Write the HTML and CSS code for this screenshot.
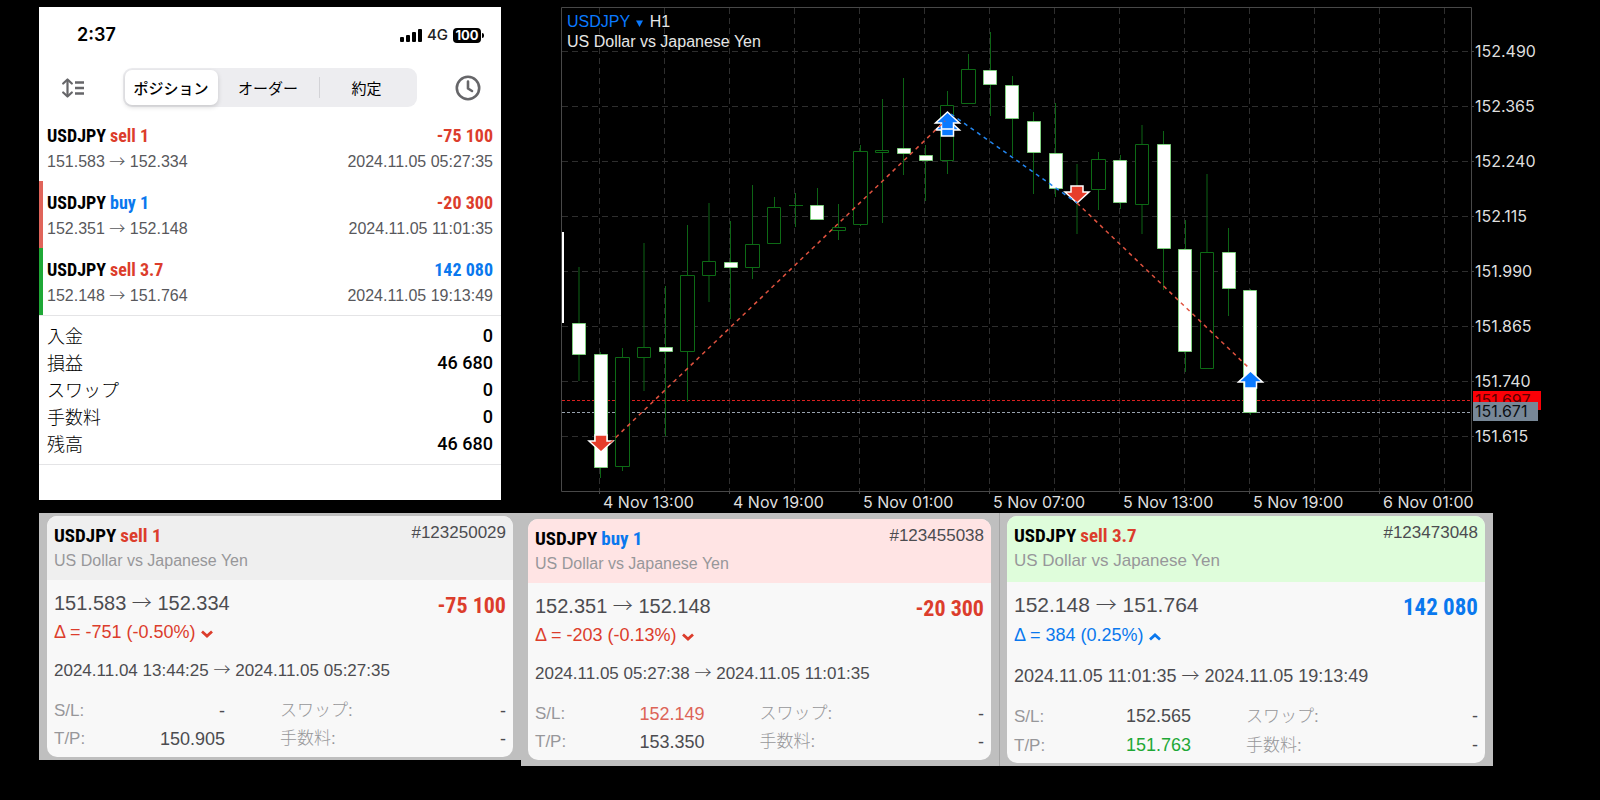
FILE: index.html
```html
<!DOCTYPE html>
<html lang="ja">
<head>
<meta charset="utf-8">
<meta name="viewport" content="width=device-width, initial-scale=1">
<title>USDJPY</title>
<link rel="stylesheet" href="styles.css">
</head>
<body>
<main class="board">
  <div class="top">
    <section class="phone">
      <div class="status">
        <time class="clock">2:37</time>
        <div class="status-right">
          <svg class="signal" width="22" height="13" viewBox="0 0 22 13" aria-hidden="true"><rect x="0" y="8" width="4" height="5" rx="1"/><rect x="6" y="6" width="4" height="7" rx="1"/><rect x="12" y="3" width="4" height="10" rx="1"/><rect x="18" y="0" width="4" height="13" rx="1"/></svg>
          <span class="network">4G</span>
          <span class="battery">100</span>
        </div>
      </div>
      <div class="toolbar">
        <button class="icon-button" type="button" aria-label="並べ替え">
          <svg width="22" height="20" viewBox="0 0 22 20" fill="none" stroke="#666669" aria-hidden="true"><path d="M5.500 3v14" stroke-width="2.200"/><path d="M1.200 5.500L5.500 1.500l4.300 4M1.200 14.500l4.300 4 4.300-4" stroke-width="2.200" stroke-linecap="round" stroke-linejoin="round"/><path d="M13 4.500h9M13 10h9M13 15.500h9" stroke-width="2.600"/></svg>
        </button>
        <div class="segments">
          <button class="segment active" type="button">ポジション</button>
          <button class="segment" type="button">オーダー</button>
          <button class="segment divided" type="button">約定</button>
        </div>
        <button class="icon-button" type="button" aria-label="履歴">
          <svg width="26" height="26" viewBox="0 0 26 26" fill="none" stroke="#666669" stroke-width="2.600" stroke-linecap="round" stroke-linejoin="round" aria-hidden="true"><circle cx="13" cy="13" r="11.200"/><path d="M13 6.500V13.500l4 2.500"/></svg>
        </button>
      </div>
      <ul class="deals">
        <li class="deal">
          <div class="line head"><span class="pair"><span>USDJPY</span> <span class="red">sell 1</span></span><span class="red">-75 100</span></div>
          <div class="line sub"><span>151.583 <span class="to">→</span> 152.334</span><span>2024.11.05 05:27:35</span></div>
        </li>
        <li class="deal loss">
          <div class="line head"><span class="pair"><span>USDJPY</span> <span class="blue">buy 1</span></span><span class="red">-20 300</span></div>
          <div class="line sub"><span>152.351 <span class="to">→</span> 152.148</span><span>2024.11.05 11:01:35</span></div>
        </li>
        <li class="deal gain">
          <div class="line head"><span class="pair"><span>USDJPY</span> <span class="red">sell 3.7</span></span><span class="blue">142 080</span></div>
          <div class="line sub"><span>152.148 <span class="to">→</span> 151.764</span><span>2024.11.05 19:13:49</span></div>
        </li>
      </ul>
      <dl class="totals">
        <div class="line"><dt>入金</dt><dd>0</dd></div>
        <div class="line"><dt>損益</dt><dd>46 680</dd></div>
        <div class="line"><dt>スワップ</dt><dd>0</dd></div>
        <div class="line"><dt>手数料</dt><dd>0</dd></div>
        <div class="line"><dt>残高</dt><dd>46 680</dd></div>
      </dl>
    </section>

    <section class="chart">
      <div class="chart-title">
        <div><button class="symbol" type="button">USDJPY <svg width="7" height="7" viewBox="0 0 7 7" aria-hidden="true"><path d="M0 0.500h7L3.500 7z" fill="#0a7aff"/></svg></button> H1</div>
        <div>US Dollar vs Japanese Yen</div>
      </div>
      <svg class="plot" viewBox="561 0 1039 512" role="img" aria-label="USDJPY H1">
        <defs>
          <path id="up" d="M0 0L12 11H6V17H-6V11H-12Z"/>
          <path id="down" d="M0 0L12 -11H6V-17H-6V-11H-12Z"/>
        </defs>
        <path class="grid" d="M599.500 8V491M664.500 8V491M729.500 8V491M794.500 8V491M859.500 8V491M924.500 8V491M989.500 8V491M1054.500 8V491M1119.500 8V491M1184.500 8V491M1249.500 8V491M1314.500 8V491M1379.500 8V491M1444.500 8V491"/>
        <path class="grid" d="M562 51.500H1471M562 106.500H1471M562 161.500H1471M562 216.500H1471M562 271.500H1471M562 326.500H1471M562 381.500H1471M562 436.500H1471"/>
        <path class="frame" d="M561.500 7.500H1471.500V491.500H561.500ZM599.500 491V494M729.500 491V494M859.500 491V494M989.500 491V494M1119.500 491V494M1249.500 491V494M1379.500 491V494M1471 51.500H1474M1471 106.500H1474M1471 161.500H1474M1471 216.500H1474M1471 271.500H1474M1471 326.500H1474M1471 381.500H1474M1471 436.500H1474"/>
        <path class="level" stroke="#d8211f" d="M562 400.500H1470"/>
        <path class="level" stroke="#98a2ae" d="M562 412.500H1470"/>

        <path class="wick" d="M579 267V381M600.500 352V478M622.500 348V471M644 243V391M665.500 286V436M687.500 225V402M709 203V302M730.500 221V319M752.500 185V279M774.500 197V243M795.500 193V227M817.500 188V220M838.500 204V240M860.500 145V226M882.500 99V223M903.500 78V175M925.500 145V201M947.500 91V174M968.500 54V104M990.500 32V116M1012.500 76V156M1033.500 112V194M1055.500 103V197M1077 164V234M1098.500 152V210M1120.500 155V209M1142 125V234M1163.500 131V290M1185.500 220V372M1207 174V252M1228.500 228V316M1250.500 289V415"/>
        <path class="hollow" d="M615.500 357.500h14v109h-14zM637.500 347.500h13v10h-13zM680.500 275.500h14v76h-14zM702.500 261.500h13v14h-13zM745.500 244.500h14v23h-14zM767.500 207.500h13v36h-13zM789 205.500h14M832.500 227.500h13v3h-13zM853.500 151.500h14v73h-14zM875.500 150.500h13v2h-13zM940.500 105.500h13v55h-13zM961.500 69.500h14v34h-14zM1091.500 159.500h14v30h-14zM1135.500 144.500h13v60h-13zM1200.500 252.500h13v116h-13z"/>
        <path class="solid" d="M572.500 323.500h13v31h-13zM594.500 354.500h13v113h-13zM659.500 347.500h13v4h-13zM724.500 262.500h13v5h-13zM810.500 205.500h13v14h-13zM897.500 148.500h13v5h-13zM919.500 155.500h13v5h-13zM983.500 70.500h13v14h-13zM1005.500 85.500h13v33h-13zM1027.500 121.500h13v31h-13zM1049.500 153.500h13v35h-13zM1113.500 160.500h13v42h-13zM1157.500 144.500h13v104h-13zM1178.500 249.500h13v102h-13zM1222.500 252.500h13v36h-13zM1243.500 290.500h13v122h-13z"/>
        <rect x="562" y="232" width="2" height="91" fill="#fff"/>

        <g stroke="#fff" stroke-width="1.500">
          <use href="#down" x="601" y="452" fill="#e63e2b"/>
          <use href="#up" x="947.500" y="119" fill="#0a7aff"/>
          <use href="#up" x="947.500" y="112" fill="#0a7aff"/>
          <use href="#down" x="1077" y="203" fill="#e63e2b"/>
          <use href="#up" x="1250.500" y="371" fill="#0a7aff"/>
        </g>
        <path class="trade" stroke="#e0523f" d="M610 443L945 121"/>
        <path class="trade" stroke="#2286f0" d="M951 114L1077 203"/>
        <path class="trade" stroke="#e0523f" d="M1077 203L1250 369"/>

        <g class="axis">
          <text x="1475" y="57">152.490</text>
          <text x="1475" y="112">152.365</text>
          <text x="1475" y="167">152.240</text>
          <text x="1475" y="222">152.115</text>
          <text x="1475" y="277">151.990</text>
          <text x="1475" y="332">151.865</text>
          <text x="1475" y="387">151.740</text>
          <text x="1475" y="442">151.615</text>
          <text x="603" y="508">4 Nov 13:00</text>
          <text x="733" y="508">4 Nov 19:00</text>
          <text x="863" y="508">5 Nov 01:00</text>
          <text x="993" y="508">5 Nov 07:00</text>
          <text x="1123" y="508">5 Nov 13:00</text>
          <text x="1253" y="508">5 Nov 19:00</text>
          <text x="1383" y="508">6 Nov 01:00</text>
        </g>
        <rect x="1473" y="391" width="68" height="19" fill="#fb0007"/>
        <text class="quote" x="1475" y="406" fill="#5c0000">151.697</text>
        <rect x="1473" y="402" width="65" height="19" fill="#778797"/>
        <text class="quote" x="1475" y="417" fill="#0c0f12">151.671</text>
      </svg>
    </section>
  </div>

  <div class="details">
    <section class="tray">
      <article class="card">
        <header class="card-head">
          <div class="line"><h2 class="card-title pair"><span>USDJPY</span> <span class="red">sell 1</span></h2><span class="ticket">#123250029</span></div>
          <p class="desc">US Dollar vs Japanese Yen</p>
        </header>
        <div class="card-body">
          <div class="line price"><span>151.583 <span class="to">→</span> 152.334</span><strong class="profit red">-75 100</strong></div>
          <p class="delta red">Δ = -751 (-0.50%) <svg width="12" height="8" viewBox="0 0 12 8" aria-hidden="true"><path d="M1 1.500L6 6l5-4.500" fill="none" stroke="currentColor" stroke-width="2.800"/></svg></p>
          <p class="period">2024.11.04 13:44:25 <span class="to">→</span> 2024.11.05 05:27:35</p>
          <dl class="facts">
            <div class="fact"><dt>S/L:</dt><dd>-</dd></div>
            <div class="fact"><dt>スワップ:</dt><dd>-</dd></div>
            <div class="fact"><dt>T/P:</dt><dd>150.905</dd></div>
            <div class="fact"><dt>手数料:</dt><dd>-</dd></div>
          </dl>
        </div>
      </article>
    </section>
    <section class="tray middle">
      <article class="card">
        <header class="card-head pink">
          <div class="line"><h2 class="card-title pair"><span>USDJPY</span> <span class="blue">buy 1</span></h2><span class="ticket">#123455038</span></div>
          <p class="desc">US Dollar vs Japanese Yen</p>
        </header>
        <div class="card-body">
          <div class="line price"><span>152.351 <span class="to">→</span> 152.148</span><strong class="profit red">-20 300</strong></div>
          <p class="delta red">Δ = -203 (-0.13%) <svg width="12" height="8" viewBox="0 0 12 8" aria-hidden="true"><path d="M1 1.500L6 6l5-4.500" fill="none" stroke="currentColor" stroke-width="2.800"/></svg></p>
          <p class="period">2024.11.05 05:27:38 <span class="to">→</span> 2024.11.05 11:01:35</p>
          <dl class="facts">
            <div class="fact"><dt>S/L:</dt><dd class="hit-stop">152.149</dd></div>
            <div class="fact"><dt>スワップ:</dt><dd>-</dd></div>
            <div class="fact"><dt>T/P:</dt><dd>153.350</dd></div>
            <div class="fact"><dt>手数料:</dt><dd>-</dd></div>
          </dl>
        </div>
      </article>
    </section>
    <section class="tray last">
      <article class="card large">
        <header class="card-head green">
          <div class="line"><h2 class="card-title pair"><span>USDJPY</span> <span class="red">sell 3.7</span></h2><span class="ticket">#123473048</span></div>
          <p class="desc">US Dollar vs Japanese Yen</p>
        </header>
        <div class="card-body">
          <div class="line price"><span>152.148 <span class="to">→</span> 151.764</span><strong class="profit blue">142 080</strong></div>
          <p class="delta blue">Δ = 384 (0.25%) <svg width="12" height="8" viewBox="0 0 12 8" aria-hidden="true"><path d="M1 6.500L6 2l5 4.500" fill="none" stroke="currentColor" stroke-width="2.800"/></svg></p>
          <p class="period">2024.11.05 11:01:35 <span class="to">→</span> 2024.11.05 19:13:49</p>
          <dl class="facts">
            <div class="fact"><dt>S/L:</dt><dd>152.565</dd></div>
            <div class="fact"><dt>スワップ:</dt><dd>-</dd></div>
            <div class="fact"><dt>T/P:</dt><dd class="hit-target">151.763</dd></div>
            <div class="fact"><dt>手数料:</dt><dd>-</dd></div>
          </dl>
        </div>
      </article>
    </section>
  </div>
</main>
</body>
</html>
```

FILE: styles.css
```css
* { box-sizing: border-box; }

body {
  margin: 0;
  background: #000;
  color: #000;
  font-family: "Liberation Sans", "Noto Sans CJK JP", sans-serif;
  font-size: 16px;
}

h2, p, ul, dl, dd { margin: 0; padding: 0; }
ul { list-style: none; }
button { border: 0; padding: 0; background: none; font: inherit; color: inherit; }

.line { display: flex; justify-content: space-between; }
.red { color: #dc3d2c; }
.blue { color: #0a78ee; }
.pair { display: flex; gap: 4px; }
.to { font-family: "Noto Sans CJK JP", sans-serif; font-weight: 300; line-height: 1; }

.top {
  display: grid;
  grid-template-columns: 462fr 1039fr;
  gap: 60px;
  padding-left: 39px;
  align-items: start;
}

/* Phone panel */
.phone { margin-top: 7px; padding-bottom: 35px; background: #fff; }

.status {
  display: flex;
  justify-content: space-between;
  align-items: center;
  height: 56px;
  padding: 0 20px 0 38px;
}
.clock { font: 600 18px/24px Inter, sans-serif; }
.status-right { display: flex; align-items: center; gap: 5px; }
.network { font: 500 15px/20px Inter, sans-serif; color: #222; }
.battery {
  position: relative;
  width: 28px;
  border-radius: 4px;
  background: #000;
  color: #fff;
  font: 700 13px/15px Inter, sans-serif;
  text-align: center;
}
.battery::after {
  content: "";
  position: absolute;
  top: 5px;
  right: -3px;
  width: 2px;
  height: 5px;
  border-radius: 0 2px 2px 0;
  background: #000;
}

.toolbar {
  display: flex;
  justify-content: space-between;
  align-items: center;
  height: 51px;
  padding: 0 20px 2px 23px;
}
.icon-button { display: flex; }
.segments {
  display: grid;
  grid-template-columns: 93fr 101fr 96fr;
  width: 294px;
  padding: 2px;
  border-radius: 9px;
  background: #ededf0;
}
.segment {
  border-radius: 7px;
  font: 400 15px/35px "Noto Sans CJK JP", sans-serif;
}
.segment.active { background: #fff; box-shadow: 0 2px 5px rgba(0, 0, 0, .16); font-weight: 500; }
.segment.divided {
  background: linear-gradient(#d3d3d7, #d3d3d7) left center / 1px 21px no-repeat;
  border-radius: 0;
}

.deal { padding: 9px 8px 6px; }
.deal.loss { box-shadow: inset 4px 0 #e0645a; }
.deal.gain { box-shadow: inset 4px 0 #1fa836; }
.head {
  font: bold 18px/25px "Liberation Sans Narrow", "Roboto Condensed", "Open Sans Condensed", "Liberation Sans", sans-serif;
}
.sub { line-height: 27px; color: #58585c; }

.totals {
  padding: 6px 8px 7px;
  border-top: 1px solid #e4e4e6;
  border-bottom: 1px solid #e4e4e6;
  font-size: 18px;
  line-height: 27px;
}
.totals dt { font-family: "Noto Sans CJK JP", sans-serif; font-weight: 300; }
.totals dd { font-family: Roboto, sans-serif; font-weight: 500; }

/* Chart */
.chart { position: relative; }
.chart-title {
  position: absolute;
  top: 12px;
  left: 6px;
  color: #e6e6e6;
  line-height: 20px;
}
.symbol { color: #0a7aff; }
.symbol svg { margin: 0 2px; }
.plot { display: block; width: 100%; }
.plot .grid { fill: none; stroke: #2e2e2e; stroke-dasharray: 6 4; }
.plot .frame { fill: none; stroke: #484848; }
.plot .level { fill: none; stroke-dasharray: 3 2; }
.plot .wick { fill: none; stroke: #0d6415; }
.plot .hollow { fill: #000; stroke: #0d6a15; }
.plot .solid { fill: #fff; stroke: #7fce7f; }
.plot .trade { fill: none; stroke-width: 1.500; stroke-dasharray: 4 4; }
.axis text, .quote { font: 16px Inter, sans-serif; }
.axis { fill: #dedede; }

/* Position details */
.details {
  display: grid;
  grid-template-columns: 482fr 478fr 494fr;
  align-items: start;
  margin: 1px 107px 0 39px;
}
.tray { padding: 3px 8px; background: #bfbfbf; }
.tray.middle { padding: 6px 8px 6px 7px; }
.tray.last { border-left: 1px solid #a4a4a4; padding-left: 7px; }

.card { overflow: hidden; border-radius: 10px; background: #f8f8f8; color: #4c4c50; }
.card-head { padding: 6px 7px 8px; background: #efefef; }
.card-head.pink { background: #ffe4e4; }
.card-head.green { background: #dffddb; }
.card-title {
  color: #000;
  font: bold 19px/27px "Liberation Sans Narrow", "Roboto Condensed", "Open Sans Condensed", "Liberation Sans", sans-serif;
}
.ticket { font-size: 17px; line-height: 22px; }
.desc { line-height: 23px; color: #97979a; }

.card-body { padding: 9px 7px 4px; }
.price { font-size: 20px; line-height: 28px; }
.profit {
  font: bold 22px/34px "Liberation Sans Narrow", "Roboto Condensed", "Open Sans Condensed", "Liberation Sans", sans-serif;
  margin-bottom: -6px;
}
.delta { font-size: 18px; line-height: 30px; }
.period { margin-top: 12px; font-size: 17px; line-height: 24px; }
.facts {
  display: grid;
  grid-template-columns: 1fr 1fr;
  margin-top: 14px;
  line-height: 28px;
}
.fact { display: flex; justify-content: space-between; }
.fact:nth-child(odd) { padding-right: 55px; }
.fact dt { font-size: 17px; font-weight: 300; color: #97979a; }
.fact dd { font-size: 18px; }
.fact .hit-stop { color: #dd6457; }
.fact .hit-target { color: #1fa836; }

.card.large .card-head { padding-bottom: 9px; }
.card.large .desc { font-size: 17px; line-height: 24px; }
.card.large .price { font-size: 21px; }
.card.large .profit { font-size: 23px; }
.card.large .delta { line-height: 32px; }
.card.large .period { margin-top: 13px; font-size: 18px; }
.card.large .facts { line-height: 29px; }
.card.large .card-body { padding-bottom: 3px; }
```
